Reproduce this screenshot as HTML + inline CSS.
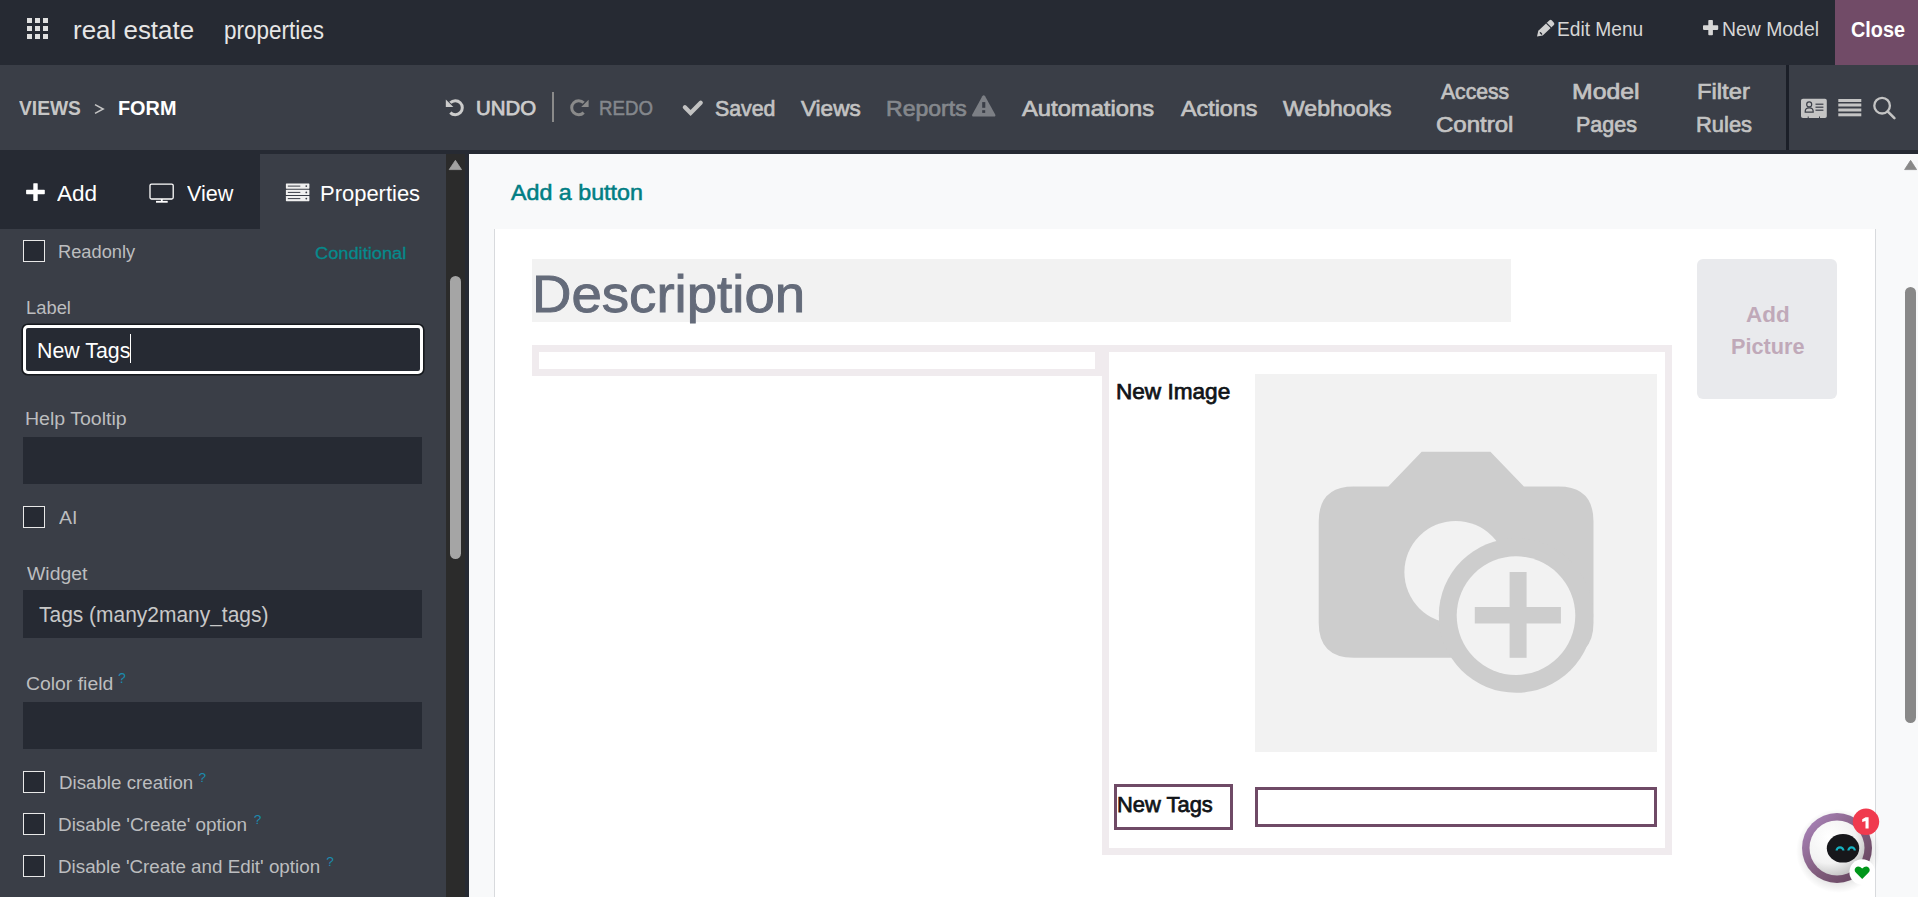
<!DOCTYPE html>
<html><head><meta charset="utf-8"><style>
html,body{margin:0;padding:0;width:1918px;height:897px;overflow:hidden;background:#f8f9fa;font-family:"Liberation Sans", sans-serif;}
.r{position:absolute;}
.t{position:absolute;white-space:pre;line-height:1;transform-origin:0 0;}
.mk{display:inline-block;width:0;height:0;vertical-align:baseline;}
svg{position:absolute;overflow:visible;}
</style></head><body>
<!-- top bar -->
<div class="r" style="left:0;top:0;width:1918px;height:65px;background:#262a33"></div>
<div class="r" style="left:1835px;top:0;width:83px;height:65px;background:#714b67"></div>
<!-- grid icon -->
<svg style="left:0;top:0" width="60" height="60" viewBox="0 0 60 60">
<g fill="#e0e0e0">
<rect x="27" y="18" width="5" height="5"/><rect x="35" y="18" width="5" height="5"/><rect x="43" y="18" width="5" height="5"/>
<rect x="27" y="26" width="5" height="5"/><rect x="35" y="26" width="5" height="5"/><rect x="43" y="26" width="5" height="5"/>
<rect x="27" y="34" width="5" height="5"/><rect x="35" y="34" width="5" height="5"/><rect x="43" y="34" width="5" height="5"/>
</g></svg>
<!-- pencil -->
<svg style="left:1530px;top:14px" width="30" height="28" viewBox="1530 14 30 28">
<path d="M1549.5 20.3 Q1550.6 19.3 1551.7 20.3 L1553.9 22.7 Q1554.9 23.9 1553.9 25.1 L1542.7 35.6 L1537 36.5 L1538.3 30.8 Z" fill="#d0d0d0"/>
<path d="M1546.4 23.2 L1551.2 27.9" stroke="#262a33" stroke-width="1.1"/>
<path d="M1540.4 32.7 L1541.6 33.9" stroke="#262a33" stroke-width="1.4" stroke-linecap="round"/>
</svg>
<!-- plus new model -->
<svg style="left:1700px;top:16px" width="22" height="22" viewBox="1700 16 22 22">
<g fill="#d6d6d6"><rect x="1708.3" y="20" width="4.6" height="15.3" rx="0.8"/><rect x="1703" y="25.3" width="15.2" height="4.6" rx="0.8"/></g></svg>

<!-- second bar -->
<div class="r" style="left:0;top:65px;width:1918px;height:85px;background:#3a3e47"></div>
<div class="r" style="left:1786px;top:65px;width:3px;height:85px;background:#1b1f28"></div>
<div class="r" style="left:0;top:150px;width:1918px;height:4px;background:#262a33"></div>
<!-- chevron > -->
<svg style="left:90px;top:100px" width="20" height="20" viewBox="90 100 20 20">
<path d="M95 104.6 L103.2 109 L95 113.4" fill="none" stroke="#c6c6c6" stroke-width="1.5"/></svg>
<!-- undo -->
<svg style="left:440px;top:92px" width="30" height="30" viewBox="440 92 30 30">
<path d="M450.3 102.8 A7 7 0 1 1 450.3 112.6" fill="none" stroke="#cccccc" stroke-width="3"/>
<path d="M445.8 99.6 L445.8 106.9 L453.3 106.9 Z" fill="#cccccc"/></svg>
<div class="r" style="left:552px;top:92px;width:2px;height:30px;background:#8a8a8a"></div>
<!-- redo -->
<svg style="left:565px;top:92px" width="30" height="30" viewBox="565 92 30 30">
<path d="M583.7 102.8 A7 7 0 1 0 583.7 112.6" fill="none" stroke="#8a8a8a" stroke-width="3"/>
<path d="M588.6 99.8 L588.6 107 L581.2 107 Z" fill="#8a8a8a"/></svg>
<!-- check -->
<svg style="left:680px;top:95px" width="26" height="26" viewBox="680 95 26 26">
<path d="M684.9 107.2 L690.6 112.9 L700.7 102.8" fill="none" stroke="#c2c2c2" stroke-width="4.3" stroke-linecap="round" stroke-linejoin="miter"/></svg>
<!-- warning -->
<svg style="left:970px;top:93px" width="28" height="28" viewBox="970 93 28 28">
<path d="M982.3 96.2 Q983.7 94.2 985.1 96.2 L995.2 114.6 Q996 116.6 994 116.6 L973.6 116.6 Q971.5 116.6 972.3 114.6 Z" fill="#7c7f85"/>
<rect x="982.2" y="102.1" width="3.1" height="5.7" fill="#3a3e47"/>
<rect x="982.2" y="110.2" width="3" height="2.7" fill="#3a3e47"/></svg>
<!-- card icon -->
<svg style="left:1798px;top:95px" width="32" height="26" viewBox="1798 95 32 26">
<path d="M1803 98.7 H1825 Q1826.8 98.7 1826.8 100.5 V116.3 Q1826.8 118 1825 118 H1820 V116.6 H1819 V118 H1808.7 V116.6 H1807.7 V118 H1803 Q1801 118 1801 116.3 V100.5 Q1801 98.7 1803 98.7Z" fill="#c4c4c4"/>
<circle cx="1809.2" cy="104.4" r="2.5" fill="none" stroke="#3a3e47" stroke-width="1.2"/>
<path d="M1805.2 112.2 Q1804.9 107.8 1809.2 107.8 Q1813.5 107.8 1813.2 112.2Z" fill="none" stroke="#3a3e47" stroke-width="1.2"/>
<rect x="1815.5" y="103.6" width="7.9" height="1.2" fill="#3a3e47"/>
<rect x="1815.5" y="106.6" width="7.9" height="1.2" fill="#3a3e47"/>
<rect x="1815.5" y="109.6" width="7.9" height="1.2" fill="#3a3e47"/>
</svg>
<!-- list icon -->
<svg style="left:1835px;top:95px" width="30" height="26" viewBox="1835 95 30 26">
<g fill="#c4c4c4"><rect x="1838.3" y="99" width="23" height="3"/><rect x="1838.3" y="103.5" width="23" height="3"/><rect x="1838.3" y="108.5" width="23" height="3"/><rect x="1838.3" y="113.3" width="23" height="3"/></g></svg>
<!-- search -->
<svg style="left:1868px;top:92px" width="32" height="32" viewBox="1868 92 32 32">
<circle cx="1882.1" cy="105.7" r="7.8" fill="none" stroke="#c4c4c4" stroke-width="2.3"/>
<path d="M1887.6 111.3 L1894.4 118.1" stroke="#c4c4c4" stroke-width="2.6" stroke-linecap="round"/></svg>

<!-- left panel -->
<div class="r" style="left:0;top:154px;width:446px;height:743px;background:#3a3e47"></div>
<div class="r" style="left:0;top:154px;width:260px;height:75px;background:#262a33"></div>
<!-- tab plus -->
<svg style="left:20px;top:178px" width="30" height="30" viewBox="20 178 30 30">
<g fill="#ffffff"><rect x="33.3" y="183.2" width="4.4" height="17.7" rx="0.6"/><rect x="26.1" y="189.8" width="18.7" height="4.4" rx="0.6"/></g></svg>
<!-- monitor -->
<svg style="left:145px;top:178px" width="34" height="30" viewBox="145 178 34 30">
<rect x="150" y="184.1" width="23.2" height="14.9" rx="1.5" fill="none" stroke="#ffffff" stroke-width="1.3"/>
<rect x="160.9" y="199" width="1.8" height="2" fill="#fff"/>
<rect x="156" y="200.9" width="11.7" height="1.8" fill="#fff"/></svg>
<!-- server icon -->
<svg style="left:280px;top:178px" width="34" height="30" viewBox="280 178 34 30">
<g fill="#f0f0f0"><rect x="285.9" y="183.5" width="23.5" height="5.2" rx="0.6"/><rect x="285.9" y="189.8" width="23.5" height="5.2" rx="0.6"/><rect x="285.9" y="196" width="23.5" height="5.2" rx="0.6"/></g>
<g fill="#3a3e47"><rect x="287.8" y="185.6" width="12.5" height="1" /><rect x="287.8" y="191.9" width="12.5" height="1"/><rect x="287.8" y="198.1" width="12.5" height="1"/>
<circle cx="306.3" cy="186.1" r="0.9"/><circle cx="306.3" cy="192.4" r="0.9"/><circle cx="306.3" cy="198.6" r="0.9"/></g></svg>

<!-- checkboxes -->
<div class="r" style="left:23px;top:240px;width:19.6px;height:19.6px;border:1.2px solid #e8e8e8;background:#262a33"></div>
<div class="r" style="left:23px;top:506px;width:19.6px;height:19.6px;border:1.2px solid #e8e8e8;background:#262a33"></div>
<div class="r" style="left:23px;top:771px;width:19.6px;height:19.6px;border:1.2px solid #e8e8e8;background:#262a33"></div>
<div class="r" style="left:23px;top:813px;width:19.6px;height:19.6px;border:1.2px solid #e8e8e8;background:#262a33"></div>
<div class="r" style="left:23px;top:855px;width:19.6px;height:19.6px;border:1.2px solid #e8e8e8;background:#262a33"></div>
<!-- label input -->
<div class="r" style="left:23px;top:325px;width:394px;height:43px;border:3px solid #ffffff;border-radius:5px;background:#262a33;box-shadow:0 0 0 1.6px #16191e"></div>
<div class="r" style="left:130px;top:334px;width:1px;height:28.5px;background:#ffffff"></div>
<div class="r" style="left:23px;top:437px;width:399px;height:47px;background:#262a33"></div>
<div class="r" style="left:23px;top:590px;width:399px;height:48px;background:#262a33"></div>
<div class="r" style="left:23px;top:702px;width:399px;height:47px;background:#262a33"></div>

<!-- left scrollbar -->
<div class="r" style="left:446px;top:154px;width:19px;height:743px;background:#2b2b2b"></div>
<div class="r" style="left:465px;top:154px;width:4px;height:743px;background:#262a33"></div>
<svg style="left:446px;top:156px" width="19" height="18" viewBox="446 156 19 18">
<path d="M455.4 160.3 L461.5 169.6 L449.2 169.6 Z" fill="#a3a3a3" stroke="#a3a3a3" stroke-width="0.8" stroke-linejoin="round"/></svg>
<div class="r" style="left:450px;top:276px;width:11px;height:283px;background:#a5a5a5;border-radius:5.5px"></div>

<!-- content -->
<div class="r" style="left:469px;top:154px;width:1449px;height:743px;background:#f8f9fa"></div>
<div class="r" style="left:494px;top:229px;width:1380px;height:668px;background:#ffffff;border-left:1px solid #d8dadd;border-right:1px solid #d8dadd"></div>
<div class="r" style="left:532px;top:259px;width:979px;height:63px;background:#f2f2f2"></div>
<div class="r" style="left:1697px;top:259px;width:140px;height:140px;background:#e9eaed;border-radius:6px"></div>
<!-- groups -->
<div class="r" style="left:532px;top:345px;width:556px;height:17px;border:7px solid #f0ebee;background:#fff"></div>
<div class="r" style="left:1102px;top:345px;width:556px;height:496px;border:7px solid #f0ebee;background:#fff"></div>
<!-- image placeholder -->
<div class="r" style="left:1255px;top:374px;width:402px;height:378px;background:#f2f2f2"></div>
<svg style="left:1255px;top:374px" width="402" height="378" viewBox="1255 374 402 378">
<g fill="#cdcdcd">
<path d="M1421.7 451.7 H1490.4 L1523.9 486.5 H1558.5 Q1593.5 486.5 1593.5 521.5 V622.8 Q1593.5 657.8 1558.5 657.8 H1353.7 Q1318.7 657.8 1318.7 622.8 V521.5 Q1318.7 486.5 1353.7 486.5 H1388.3 Z"/>
</g>
<circle cx="1455.7" cy="572.2" r="51.3" fill="#f2f2f2"/>
<circle cx="1516" cy="615.6" r="77.2" fill="#cdcdcd"/>
<circle cx="1516" cy="615.6" r="59.3" fill="#f2f2f2"/>
<rect x="1509.6" y="572" width="17" height="85.8" fill="#cdcdcd"/>
<rect x="1474.8" y="607" width="86.1" height="16.5" fill="#cdcdcd"/>
</svg>
<!-- new tags label+input -->
<div class="r" style="left:1114px;top:784px;width:113px;height:40px;border:3px solid #6f4a66"></div>
<div class="r" style="left:1255px;top:787px;width:396px;height:34px;border:3px solid #6f4a66"></div>

<!-- right scrollbar -->
<svg style="left:1900px;top:156px" width="18" height="18" viewBox="1900 156 18 18">
<path d="M1910.6 160.3 L1916.6 169.6 L1904.6 169.6 Z" fill="#888" stroke="#888" stroke-width="0.8" stroke-linejoin="round"/></svg>
<div class="r" style="left:1905px;top:287px;width:11px;height:436px;background:#888888;border-radius:5.5px"></div>

<!-- chat avatar -->
<svg style="left:1790px;top:800px" width="128" height="97" viewBox="1790 800 128 97">
<defs>
<linearGradient id="ring" x1="0" y1="0" x2="1" y2="1"><stop offset="0" stop-color="#b08ac4"/><stop offset="0.55" stop-color="#7f5b7a"/><stop offset="1" stop-color="#5f3f58"/></linearGradient>
<radialGradient id="ball" cx="0.35" cy="0.3" r="0.8"><stop offset="0" stop-color="#ffffff"/><stop offset="0.6" stop-color="#f2f2f2"/><stop offset="1" stop-color="#b9b9b9"/></radialGradient>
<radialGradient id="sh" cx="0.5" cy="0.5" r="0.5"><stop offset="0.7" stop-color="#000" stop-opacity="0.12"/><stop offset="1" stop-color="#000" stop-opacity="0"/></radialGradient>
</defs>
<circle cx="1838" cy="851" r="42" fill="url(#sh)"/>
<circle cx="1837" cy="848" r="35" fill="url(#ring)"/>
<circle cx="1837" cy="848" r="27.5" fill="url(#ball)"/>
<ellipse cx="1843" cy="848.3" rx="16.2" ry="14.3" fill="#17171b"/>
<path d="M1836.6 850.6 a3.4 3.2 0 0 1 6.8 0" fill="none" stroke="#15b3c2" stroke-width="2.2"/>
<path d="M1848.4 850.6 a3.2 3.2 0 0 1 6.4 0" fill="none" stroke="#15b3c2" stroke-width="2.2"/>
<circle cx="1866" cy="821.8" r="13.2" fill="#f03a4e"/>
<path d="M1862.2 819.2 L1865.6 817.2 L1868.6 817.2 L1868.6 828.6 L1865.5 828.6 L1865.5 821 L1862.2 822 Z" fill="#fff"/>
<circle cx="1862.2" cy="872" r="12.8" fill="#ffffff"/>
<path d="M1862.2 879 L1856 872.8 Q1853.4 869.8 1855.8 867.4 Q1858.6 865 1862.2 868.4 Q1865.8 865 1868.6 867.4 Q1871 869.8 1868.4 872.8 Z" fill="#00961a"/>
</svg>

<div class="t" id="t0" style="left:72.61px;top:17.90px;font-size:25.50px;transform:scaleX(1.0174);font-weight:normal;color:#e6e6e6;">real estate</div>
<div class="t" id="t1" style="left:224.24px;top:17.90px;font-size:25.50px;transform:scaleX(0.8822);font-weight:normal;color:#e6e6e6;">properties</div>
<div class="t" id="t2" style="left:1556.72px;top:20.30px;font-size:19.60px;transform:scaleX(0.9771);font-weight:normal;color:#d6d6d6;">Edit Menu</div>
<div class="t" id="t3" style="left:1721.60px;top:20.30px;font-size:19.60px;transform:scaleX(0.9894);font-weight:normal;color:#d6d6d6;">New Model</div>
<div class="t" id="t4" style="left:1850.91px;top:20.30px;font-size:21.53px;transform:scaleX(0.9220);font-weight:bold;color:#ffffff;">Close</div>
<div class="t" id="t5" style="left:18.76px;top:97.90px;font-size:20.07px;transform:scaleX(0.9571);font-weight:bold;color:#c6c6c6;">VIEWS</div>
<div class="t" id="t6" style="left:117.56px;top:97.90px;font-size:20.07px;transform:scaleX(0.9893);font-weight:bold;color:#ffffff;">FORM</div>
<div class="t" id="t7" style="left:475.72px;top:97.80px;font-size:20.07px;transform:scaleX(1.0176);font-weight:normal;color:#cccccc;-webkit-text-stroke:0.75px #cccccc;">UNDO</div>
<div class="t" id="t8" style="left:599.06px;top:97.80px;font-size:20.07px;transform:scaleX(0.9296);font-weight:normal;color:#84878c;-webkit-text-stroke:0.50px #84878c;">REDO</div>
<div class="t" id="t9" style="left:715.44px;top:98.00px;font-size:22.40px;transform:scaleX(0.9526);font-weight:normal;color:#c3c3c3;-webkit-text-stroke:0.70px #c3c3c3;">Saved</div>
<div class="t" id="t10" style="left:801.09px;top:98.00px;font-size:22.40px;transform:scaleX(1.0057);font-weight:normal;color:#c3c3c3;-webkit-text-stroke:0.70px #c3c3c3;">Views</div>
<div class="t" id="t11" style="left:885.80px;top:98.00px;font-size:22.40px;transform:scaleX(1.0287);font-weight:normal;color:#84878c;-webkit-text-stroke:0.70px #84878c;">Reports</div>
<div class="t" id="t12" style="left:1022.14px;top:98.00px;font-size:22.40px;transform:scaleX(1.0606);font-weight:normal;color:#c3c3c3;-webkit-text-stroke:0.70px #c3c3c3;">Automations</div>
<div class="t" id="t13" style="left:1180.74px;top:98.00px;font-size:22.40px;transform:scaleX(1.0409);font-weight:normal;color:#c3c3c3;-webkit-text-stroke:0.70px #c3c3c3;">Actions</div>
<div class="t" id="t14" style="left:1283.38px;top:98.00px;font-size:22.40px;transform:scaleX(1.0301);font-weight:normal;color:#c3c3c3;-webkit-text-stroke:0.70px #c3c3c3;">Webhooks</div>
<div class="t" id="t15" style="left:1440.75px;top:81.30px;font-size:22.40px;transform:scaleX(0.9447);font-weight:normal;color:#c3c3c3;-webkit-text-stroke:0.70px #c3c3c3;">Access</div>
<div class="t" id="t16" style="left:1435.60px;top:114.00px;font-size:22.40px;transform:scaleX(1.0732);font-weight:normal;color:#c3c3c3;-webkit-text-stroke:0.70px #c3c3c3;">Control</div>
<div class="t" id="t17" style="left:1572.45px;top:81.30px;font-size:22.40px;transform:scaleX(1.1078);font-weight:normal;color:#c3c3c3;-webkit-text-stroke:0.70px #c3c3c3;">Model</div>
<div class="t" id="t18" style="left:1575.72px;top:114.00px;font-size:22.40px;transform:scaleX(0.9610);font-weight:normal;color:#c3c3c3;-webkit-text-stroke:0.70px #c3c3c3;">Pages</div>
<div class="t" id="t19" style="left:1697.44px;top:81.30px;font-size:22.40px;transform:scaleX(1.0609);font-weight:normal;color:#c3c3c3;-webkit-text-stroke:0.70px #c3c3c3;">Filter</div>
<div class="t" id="t20" style="left:1695.99px;top:114.00px;font-size:22.40px;transform:scaleX(0.9788);font-weight:normal;color:#c3c3c3;-webkit-text-stroke:0.70px #c3c3c3;">Rules</div>
<div class="t" id="t21" style="left:56.94px;top:182.90px;font-size:22.00px;transform:scaleX(1.0246);font-weight:normal;color:#ffffff;">Add</div>
<div class="t" id="t22" style="left:186.99px;top:182.90px;font-size:22.00px;transform:scaleX(0.9821);font-weight:normal;color:#ffffff;">View</div>
<div class="t" id="t23" style="left:319.89px;top:182.90px;font-size:22.00px;transform:scaleX(0.9982);font-weight:normal;color:#ffffff;">Properties</div>
<div class="t" id="t24" style="left:58.49px;top:242.70px;font-size:18.90px;transform:scaleX(0.9675);font-weight:normal;color:#bcbdbf;">Readonly</div>
<div class="t" id="t25" style="left:314.99px;top:244.90px;font-size:17.20px;transform:scaleX(1.0611);font-weight:normal;color:#068a8c;-webkit-text-stroke:0.30px #068a8c;">Conditional</div>
<div class="t" id="t26" style="left:25.98px;top:298.70px;font-size:18.90px;transform:scaleX(0.9718);font-weight:normal;color:#bcbdbf;">Label</div>
<div class="t" id="t27" style="left:37.24px;top:340.10px;font-size:22.00px;transform:scaleX(0.9700);font-weight:normal;color:#ffffff;">New Tags</div>
<div class="t" id="t28" style="left:25.39px;top:410.00px;font-size:18.90px;transform:scaleX(1.0337);font-weight:normal;color:#bcbdbf;">Help Tooltip</div>
<div class="t" id="t29" style="left:59.35px;top:509.30px;font-size:18.90px;transform:scaleX(1.0333);font-weight:normal;color:#bcbdbf;">AI</div>
<div class="t" id="t30" style="left:26.50px;top:564.50px;font-size:18.90px;transform:scaleX(1.0292);font-weight:normal;color:#bcbdbf;">Widget</div>
<div class="t" id="t31" style="left:38.73px;top:604.10px;font-size:22.00px;transform:scaleX(0.9524);font-weight:normal;color:#c8c8c8;">Tags (many2many_tags)</div>
<div class="t" id="t32" style="left:25.63px;top:675.00px;font-size:18.90px;transform:scaleX(1.0262);font-weight:normal;color:#bcbdbf;">Color field</div>
<div class="t" id="t33" style="left:58.55px;top:774.30px;font-size:18.90px;transform:scaleX(0.9912);font-weight:normal;color:#bcbdbf;">Disable creation</div>
<div class="t" id="t34" style="left:58.44px;top:816.30px;font-size:18.90px;transform:scaleX(1.0010);font-weight:normal;color:#bcbdbf;">Disable &#39;Create&#39; option</div>
<div class="t" id="t35" style="left:58.45px;top:858.30px;font-size:18.90px;transform:scaleX(0.9949);font-weight:normal;color:#bcbdbf;">Disable &#39;Create and Edit&#39; option</div>
<div class="t" id="t36" style="left:117.94px;top:671.70px;font-size:13.91px;transform:scaleX(1.0000);font-weight:normal;color:#1a8cb0;">?</div>
<div class="t" id="t37" style="left:198.46px;top:770.50px;font-size:13.62px;transform:scaleX(1.0000);font-weight:normal;color:#1a8cb0;">?</div>
<div class="t" id="t38" style="left:253.66px;top:812.50px;font-size:13.62px;transform:scaleX(1.0000);font-weight:normal;color:#1a8cb0;">?</div>
<div class="t" id="t39" style="left:326.26px;top:854.50px;font-size:13.62px;transform:scaleX(1.0000);font-weight:normal;color:#1a8cb0;">?</div>
<div class="t" id="t40" style="left:510.94px;top:181.90px;font-size:22.50px;transform:scaleX(1.0332);font-weight:normal;color:#017e84;-webkit-text-stroke:0.55px #017e84;">Add a button</div>
<div class="t" id="t41" style="left:531.89px;top:269.30px;font-size:51.20px;transform:scaleX(1.0669);font-weight:normal;color:#646b7a;-webkit-text-stroke:0.90px #646b7a;">Description</div>
<div class="t" id="t42" style="left:1745.64px;top:303.70px;font-size:22.50px;transform:scaleX(0.9981);font-weight:bold;color:#c0a9b9;">Add</div>
<div class="t" id="t43" style="left:1730.54px;top:336.40px;font-size:22.50px;transform:scaleX(0.9632);font-weight:bold;color:#c0a9b9;">Picture</div>
<div class="t" id="t44" style="left:1116.44px;top:381.20px;font-size:22.30px;transform:scaleX(1.0128);font-weight:normal;color:#111418;-webkit-text-stroke:0.75px #111418;">New Image</div>
<div class="t" id="t45" style="left:1116.69px;top:794.00px;font-size:22.30px;transform:scaleX(0.9822);font-weight:normal;color:#111418;-webkit-text-stroke:0.75px #111418;">New Tags</div>
</body></html>
